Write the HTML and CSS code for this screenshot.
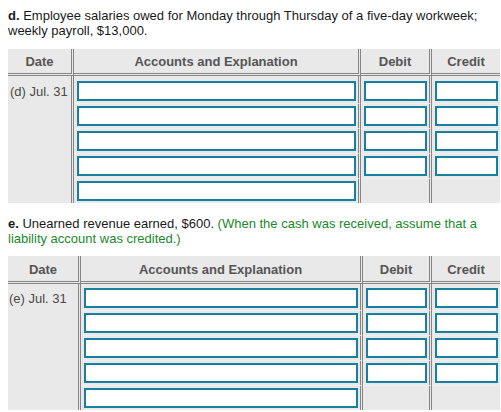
FILE: index.html
```html
<!DOCTYPE html>
<html>
<head>
<meta charset="utf-8">
<link rel="stylesheet" href="styles.css">
</head>
<body>
<p class="prompt prompt-first"><b>d.</b> Employee salaries owed for Monday through Thursday of a five-day workweek; weekly payroll, $13,000.</p>
<table class="journal journal-d">
  <thead>
    <tr>
      <th class="c-date">Date</th>
      <th class="c-acct">Accounts and Explanation</th>
      <th class="c-debit">Debit</th>
      <th class="c-credit">Credit</th>
    </tr>
  </thead>
  <tbody>
    <tr class="first"><td class="date">(d) Jul. 31</td><td><input class="box"></td><td><input class="box"></td><td class="last"><input class="box"></td></tr>
    <tr><td class="date"></td><td><input class="box"></td><td><input class="box"></td><td class="last"><input class="box"></td></tr>
    <tr><td class="date"></td><td><input class="box"></td><td><input class="box"></td><td class="last"><input class="box"></td></tr>
    <tr><td class="date"></td><td><input class="box"></td><td><input class="box"></td><td class="last"><input class="box"></td></tr>
    <tr class="end"><td class="date"></td><td><input class="box"></td><td></td><td class="last"></td></tr>
  </tbody>
</table>
<p class="prompt"><b>e.</b> Unearned revenue earned, $600. <span class="hint">(When the cash was received, assume that a liability account was credited.)</span></p>
<table class="journal journal-e">
  <thead>
    <tr>
      <th class="c-date">Date</th>
      <th class="c-acct">Accounts and Explanation</th>
      <th class="c-debit">Debit</th>
      <th class="c-credit">Credit</th>
    </tr>
  </thead>
  <tbody>
    <tr class="first"><td class="date">(e) Jul. 31</td><td><input class="box"></td><td><input class="box"></td><td class="last"><input class="box"></td></tr>
    <tr><td class="date"></td><td><input class="box"></td><td><input class="box"></td><td class="last"><input class="box"></td></tr>
    <tr><td class="date"></td><td><input class="box"></td><td><input class="box"></td><td class="last"><input class="box"></td></tr>
    <tr><td class="date"></td><td><input class="box"></td><td><input class="box"></td><td class="last"><input class="box"></td></tr>
    <tr class="end"><td class="date"></td><td><input class="box"></td><td></td><td class="last"></td></tr>
  </tbody>
</table>
</body>
</html>
```
FILE: styles.css
```css
body {
  margin: 8px 0 8px 8px;
  font-family: "Liberation Sans", Arial, sans-serif;
  font-size: 13px;
  line-height: 15px;
  color: #1a1a1a;
  background: #fff;
}
.prompt {
  margin: 0 0 10px 0;
}
.prompt-first {
  margin-bottom: 11px;
}
.hint {
  color: #21882b;
}
.journal {
  width: 492px;
  table-layout: fixed;
  border-collapse: separate;
  border-spacing: 0;
  background: #e9e9e9;
  margin-bottom: 13px;
}
.journal th,
.journal td {
  box-sizing: border-box;
  padding: 0;
  border-right: 3px double #858585;
}
.journal th:last-child,
.journal td.last {
  border-right: none;
}
.journal th {
  height: 27px;
  font-weight: bold;
  color: #555;
  text-align: center;
  vertical-align: middle;
  border-bottom: 3px double #858585;
  padding-top: 1px;
}
.journal-e th {
  height: 28px;
}
.journal-d .c-date { width: 66px; }
.journal-d .c-acct { width: 287px; }
.journal-d .c-debit { width: 71px; }
.journal-d .c-credit { width: 68px; }
.journal-e .c-date { width: 73px; }
.journal-e .c-acct { width: 282px; }
.journal-e .c-debit { width: 69px; }
.journal-e .c-credit { width: 68px; }

.journal td {
  height: 25px;
  padding: 2px 2px 2px 3px;
  border-bottom: 1px solid #eeeeee;
  vertical-align: top;
}
.journal tr.end td {
  border-bottom: none;
  height: 24px;
}
.journal-d tr.first td {
  padding-top: 5px;
  height: 28px;
}
.journal-e tr.first td {
  padding-top: 4px;
  height: 27px;
}
.journal td.date {
  padding-left: 2px;
  color: #4a4a4a;
  border-bottom: none;
  vertical-align: middle;
  white-space: nowrap;
}
.journal-e td.date {
  padding-left: 1px;
}
.box {
  display: block;
  box-sizing: border-box;
  width: 100%;
  height: 20px;
  margin: 0;
  border: 2px solid #17809f;
  background: #fff;
  padding: 0 3px;
  font: inherit;
  outline: none;
}
```
